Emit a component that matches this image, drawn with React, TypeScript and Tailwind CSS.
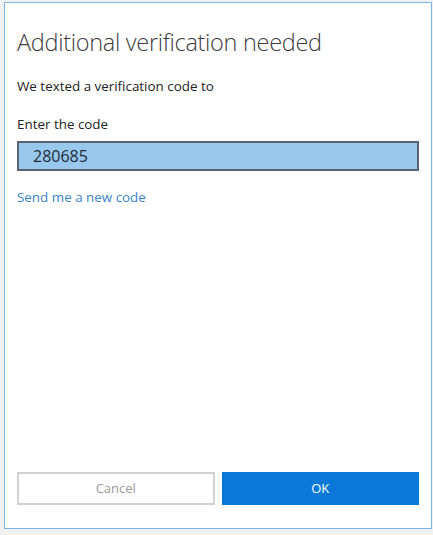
export default function App() {
  return (
    <div className="h-[535px] w-[433px] bg-[#f1f1f1] pl-[4px] pt-[2px]" style={{ fontFamily: '"Open Sans", "Noto Sans", sans-serif' }}>
      <div className="flex h-[527px] w-[428px] flex-col border border-[#7cb4e6] bg-white px-[12px]">
        <h1 className="mt-[24px] text-[23.5px] font-light leading-[30px] tracking-[-0.3px] text-[#3c3c3c]">
          Additional verification needed
        </h1>
        <p className="mt-[20px] text-[13.4px] leading-[18px] text-[#222]">We texted a verification code to</p>
        <p className="mt-[20px] text-[13.4px] leading-[18px] text-[#222]">Enter the code</p>
        <div className="mt-[8px] flex h-[30px] w-[402px] items-center border-2 border-[#5a6470] bg-[#99c8ef] pl-[14px] text-[16px] text-[#1e2a36]">
          280685
        </div>
        <a className="mt-[17px] text-[13.4px] leading-[18px] text-[#3b84c8]">Send me a new code</a>
        <div className="mt-auto mb-[23px] flex gap-[7px]">
          <button className="h-[33px] w-[198px] border-2 border-[#d2d2d2] bg-white text-[13px] text-[#9a9a9a]">Cancel</button>
          <button className="h-[33px] w-[198px] bg-[#0a78d7] text-[13px] text-white">OK</button>
        </div>
      </div>
    </div>
  );
}
